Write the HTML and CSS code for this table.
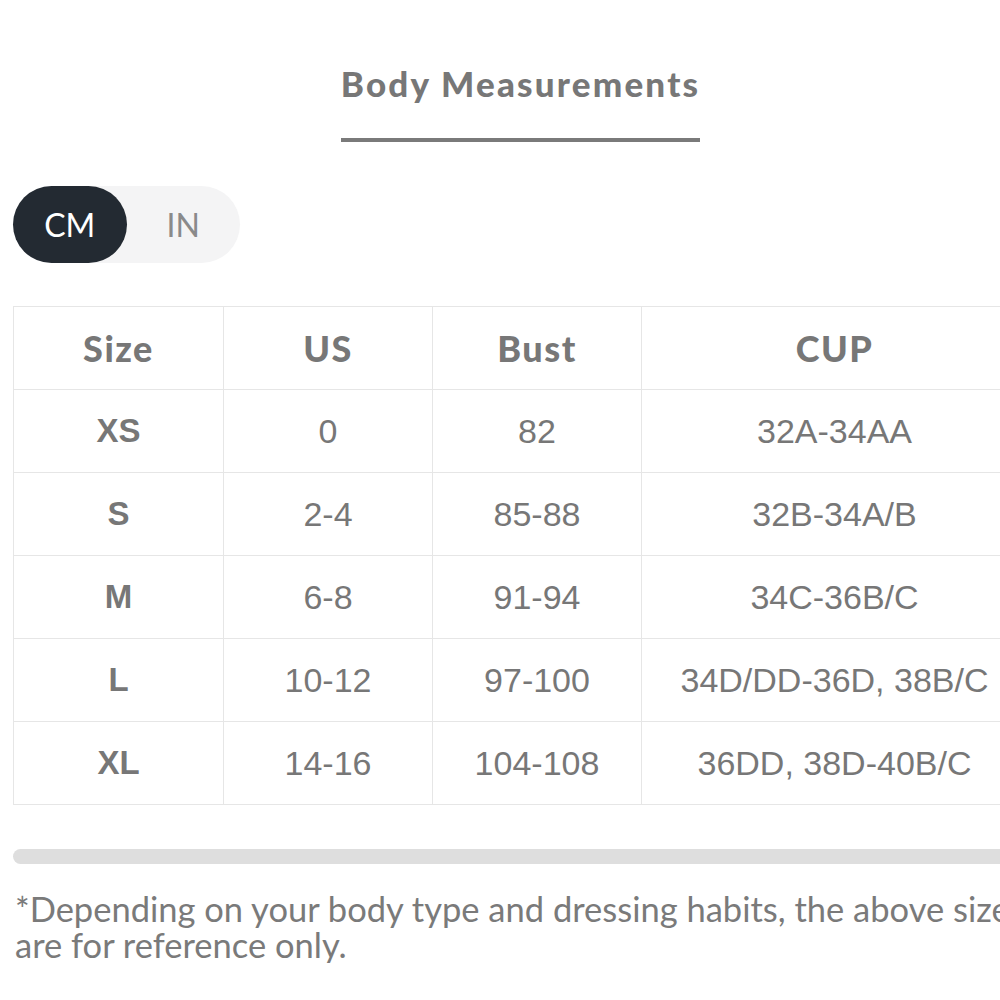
FILE: index.html
```html
<!DOCTYPE html>
<html lang="en">
<head>
<meta charset="utf-8">
<title>Body Measurements</title>
<link rel="stylesheet" href="styles.css">
</head>
<body>
<div class="wrap">
  <div class="title-row"><h2 class="title">Body Measurements</h2></div>
  <div class="toggle">
    <span class="opt active">CM</span>
    <span class="opt">IN</span>
  </div>
  <div class="table-scroll">
    <table class="sizes">
      <thead>
        <tr><th>Size</th><th>US</th><th>Bust</th><th>CUP</th></tr>
      </thead>
      <tbody>
        <tr><td class="sz">XS</td><td>0</td><td>82</td><td>32A-34AA</td></tr>
        <tr><td class="sz">S</td><td>2-4</td><td>85-88</td><td>32B-34A/B</td></tr>
        <tr><td class="sz">M</td><td>6-8</td><td>91-94</td><td>34C-36B/C</td></tr>
        <tr><td class="sz">L</td><td>10-12</td><td>97-100</td><td>34D/DD-36D, 38B/C</td></tr>
        <tr><td class="sz">XL</td><td>14-16</td><td>104-108</td><td>36DD, 38D-40B/C</td></tr>
      </tbody>
    </table>
  </div>
  <div class="scrollbar"></div>
  <p class="note">*Depending on your body type and dressing habits, the above sizes are for reference only.</p>
</div>
</body>
</html>
```
FILE: styles.css
```css
html, body {
  margin: 0;
  padding: 0;
  background: #fff;
  overflow: hidden;
}
.wrap {
  margin-left: 13px;
  width: 1015px;
  color: #777;
  font-family: "Lato", "Liberation Sans", sans-serif;
}
.title-row {
  display: flex;
  justify-content: center;
  padding-top: 63px;
}
.title {
  margin: 0;
  font-family: "Lato", sans-serif;
  font-weight: 900;
  font-size: 35px;
  letter-spacing: 2.2px;
  line-height: 40px;
  color: #777;
  padding-bottom: 35px;
  border-bottom: 4px solid #7a7a7a;
}
.toggle {
  margin-top: 44px;
  width: 227px;
  height: 77px;
  border-radius: 39px;
  background: #f4f4f5;
  display: flex;
  align-items: center;
}
.opt {
  height: 77px;
  width: 114px;
  border-radius: 39px;
  display: flex;
  align-items: center;
  justify-content: center;
  font-family: "Lato", sans-serif;
  font-size: 32px;
  color: #8a8a8a;
}
.opt.active {
  background: #232a32;
  color: #fff;
}
.table-scroll {
  margin-top: 43px;
}
.sizes {
  border-collapse: collapse;
  width: 1015px;
  table-layout: fixed;
}
.sizes th, .sizes td {
  border: 1.5px solid #e6e6e6;
  height: 82px;
  padding: 0;
  text-align: center;
  vertical-align: middle;
  color: #777;
}
.sizes th:nth-child(1) { width: 209px; }
.sizes th:nth-child(2) { width: 208px; }
.sizes th:nth-child(3) { width: 208px; }
.sizes th {
  font-family: "Lato", sans-serif;
  font-weight: 900;
  font-size: 36px;
  letter-spacing: 1.5px;
}
.sizes td {
  font-family: "Liberation Sans", Arial, sans-serif;
  font-size: 34px;
}
.sizes td.sz {
  font-weight: 700;
  font-size: 33px;
}
.scrollbar {
  margin-top: 44px;
  height: 15px;
  border-radius: 8px 0 0 8px;
  background: #dedede;
}
.note {
  margin: 27px 0 0 2px;
  font-family: "Lato", sans-serif;
  font-size: 34.5px;
  line-height: 36px;
  color: #7a7a7a;
}
```
